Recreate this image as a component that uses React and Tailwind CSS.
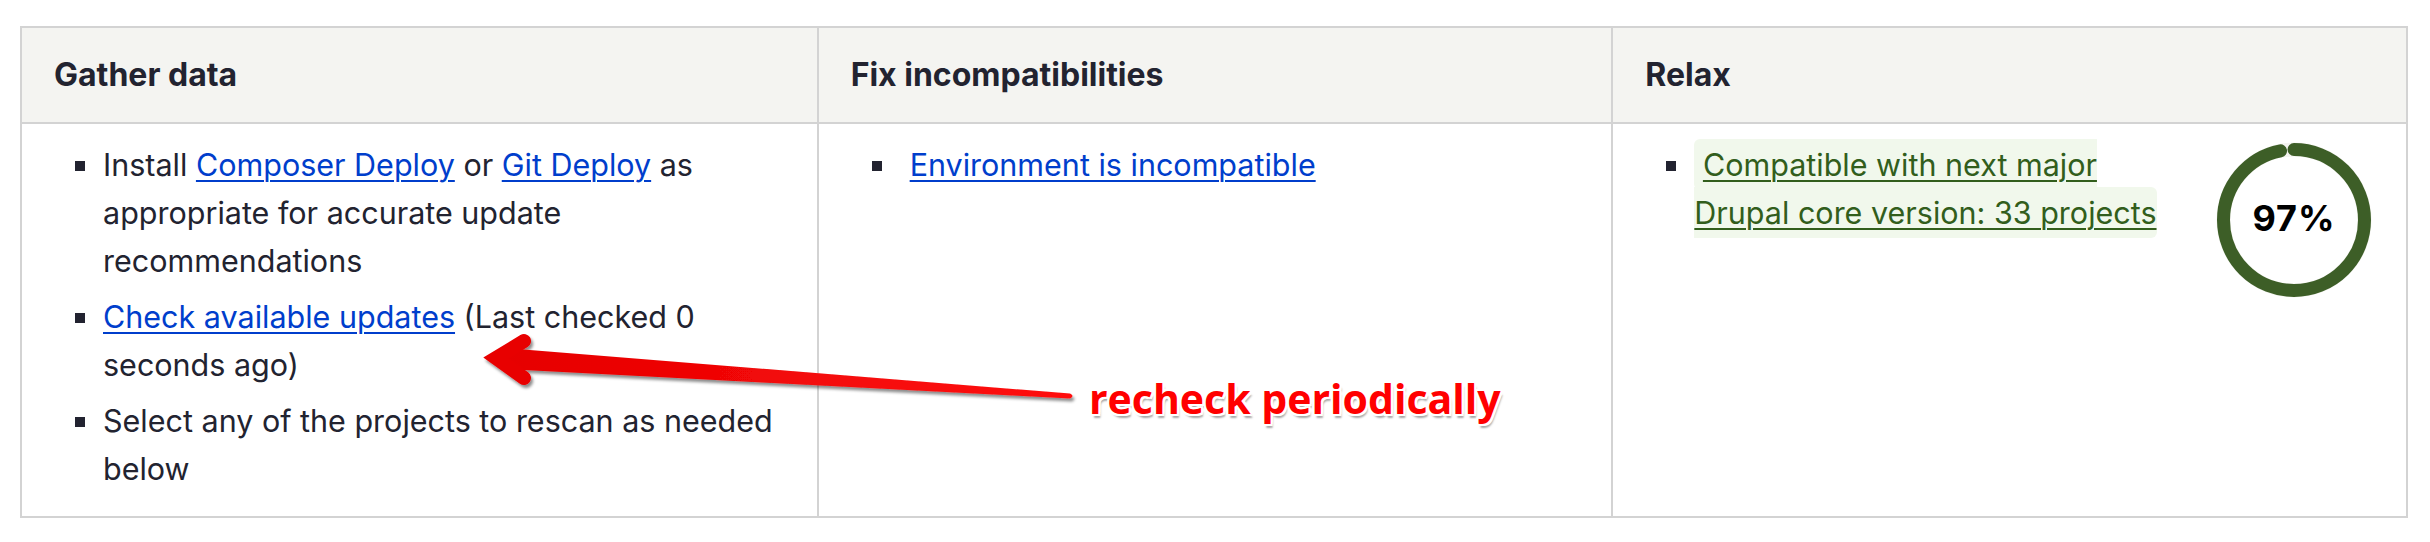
import React from "react";

function Bullet({ extra = "" }) {
  return <span className={"shrink-0 w-[10px] h-[10px] bg-[#222330] ml-[21px] mt-[20px] " + extra} />;
}

export default function App() {
  const r = 70.5;
  const C = 2 * Math.PI * r;
  const link = "text-[#003ecc] underline decoration-[2px] underline-offset-[4px]";
  const head = "bg-[#f4f4f1] border-b-2 border-[#d3d3d3] px-[32px] py-[23px] font-bold text-[32px]";
  return (
    <div className="relative w-[2430px] h-[542px] bg-white pt-[26px] pl-[20px] [font-family:Inter,sans-serif] text-[#222330]">
      <div className="w-[2388px] border-2 border-[#d3d3d3] grid grid-cols-3 text-[30.5px] leading-[48px]">
        <div className={head}>Gather data</div>
        <div className={head + " border-l-2"}>Fix incompatibilities</div>
        <div className={head + " border-l-2"}>Relax</div>

        <div className="px-[32px] pt-[17px] pb-[23px]">
          <ul className="flex flex-col gap-[8px]">
            <li className="flex">
              <Bullet extra="mr-[18px]" />
              <span>
                Install <a className={link}>Composer Deploy</a> or <a className={link}>Git Deploy</a> as appropriate for accurate update recommendations
              </span>
            </li>
            <li className="flex">
              <Bullet extra="mr-[18px]" />
              <span>
                <a className={link}>Check available updates</a> (Last checked 0 seconds ago)
              </span>
            </li>
            <li className="flex">
              <Bullet extra="mr-[18px]" />
              <span>Select any of the projects to rescan as needed below</span>
            </li>
          </ul>
        </div>

        <div className="border-l-2 border-[#d3d3d3] px-[32px] pt-[17px]">
          <ul>
            <li className="flex">
              <Bullet extra="mr-[28px]" />
              <a className={link}>Environment is incompatible</a>
            </li>
          </ul>
        </div>

        <div className="border-l-2 border-[#d3d3d3] pl-[32px] pr-[34px] pt-[17px] flex justify-between">
          <ul>
            <li className="flex whitespace-nowrap">
              <Bullet extra="mr-[18px]" />
              <span>
                <span className="bg-[#f1f8ec] rounded-[6px] py-[7px]">
                  {"\u00a0"}
                  <a className="text-[#325e1c] underline decoration-[2px] underline-offset-[4px]">
                    Compatible with next major
                    <br />
                    Drupal core version: 33 projects
                  </a>
                </span>
              </span>
            </li>
          </ul>
          <div className="relative shrink-0 w-[156px] h-[156px] mt-[1px]">
            <svg width="156" height="156" viewBox="0 0 156 156" className="absolute inset-0">
              <circle cx="78" cy="78" r={r} fill="none" stroke="#f3f3ef" strokeWidth="14" />
              <circle
                cx="78"
                cy="78"
                r={r}
                fill="none"
                stroke="#3d5e27"
                strokeWidth="13"
                strokeLinecap="round"
                strokeDasharray={`${0.97 * C - 1} ${C}`}
                transform="rotate(-90 78 78)"
              />
            </svg>
            <div className="absolute inset-0 flex items-center justify-center pb-[4px] text-[36px] tracking-[1px] font-bold text-black leading-none">
              97%
            </div>
          </div>
        </div>
      </div>

      <svg className="absolute left-0 top-0 pointer-events-none" width="2430" height="542" viewBox="0 0 2430 542">
        <defs>
          <filter id="sh" x="-10%" y="-50%" width="120%" height="200%">
            <feDropShadow dx="2" dy="3" stdDeviation="1.5" floodColor="#000" floodOpacity="0.45" />
          </filter>
          <linearGradient id="rg" x1="0" y1="0" x2="1" y2="0">
            <stop offset="0" stopColor="#e60000" />
            <stop offset="1" stopColor="#ff1010" />
          </linearGradient>
        </defs>
        <g filter="url(#sh)">
          <path d="M 505 348 L 1070 393.5 Q 1075 396 1070 398.5 L 505 369 Z" fill="url(#rg)" />
          <path
            d="M 524 341 L 496 358 L 524 378"
            fill="none"
            stroke="#e80000"
            strokeWidth="14"
            strokeLinecap="round"
            strokeLinejoin="miter"
            strokeMiterlimit="4"
          />
        </g>
      </svg>

      <div className="absolute left-[1089px] top-[378px] text-[41px] leading-none font-bold text-[#ff0000] whitespace-nowrap [font-family:'Open_Sans',sans-serif] [text-shadow:-2px_-2px_0_#fff,2px_-2px_0_#fff,-2px_2px_0_#fff,2px_2px_0_#fff,0_-2px_0_#fff,0_2px_0_#fff,-2px_0_0_#fff,2px_0_0_#fff,2px_4px_2px_rgba(0,0,0,0.35)]">
        recheck periodically
      </div>
    </div>
  );
}
